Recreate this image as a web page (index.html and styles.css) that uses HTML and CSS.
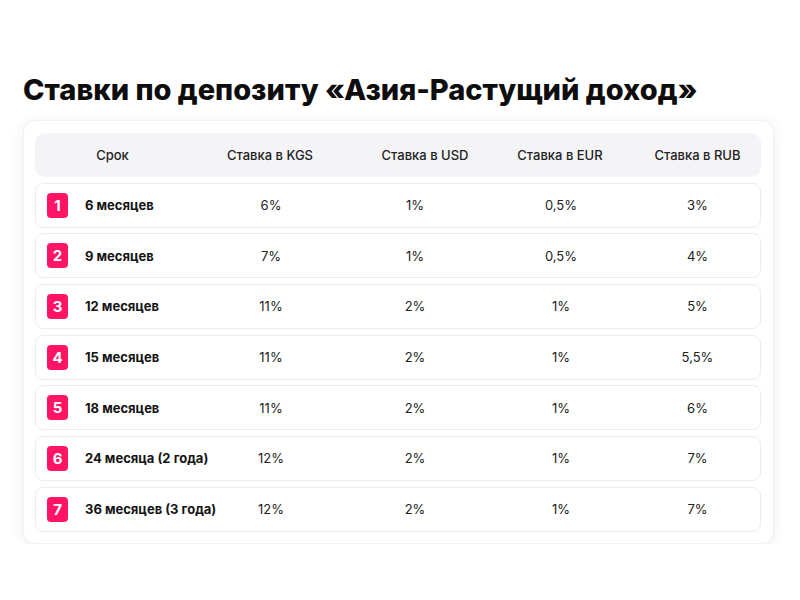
FILE: index.html
```html
<!DOCTYPE html>
<html lang="ru">
<head>
<meta charset="utf-8">
<title>Ставки по депозиту</title>
<link rel="stylesheet" href="styles.css">
</head>
<body>
<main class="page">
  <h1 class="title">Ставки по депозиту «Азия-Растущий доход»</h1>
  <section class="card">
    <div class="grid head">
      <div class="c1">Срок</div>
      <div>Ставка в KGS</div>
      <div>Ставка в USD</div>
      <div>Ставка в EUR</div>
      <div class="c5">Ставка в RUB</div>
    </div>
    <div class="grid row"><div class="term"><span class="badge">1</span>6 месяцев</div><div>6%</div><div class="usd">1%</div><div>0,5%</div><div class="c5">3%</div></div>
    <div class="grid row"><div class="term"><span class="badge">2</span>9 месяцев</div><div>7%</div><div class="usd">1%</div><div>0,5%</div><div class="c5">4%</div></div>
    <div class="grid row"><div class="term"><span class="badge">3</span>12 месяцев</div><div>11%</div><div class="usd">2%</div><div>1%</div><div class="c5">5%</div></div>
    <div class="grid row"><div class="term"><span class="badge">4</span>15 месяцев</div><div>11%</div><div class="usd">2%</div><div>1%</div><div class="c5">5,5%</div></div>
    <div class="grid row"><div class="term"><span class="badge">5</span>18 месяцев</div><div>11%</div><div class="usd">2%</div><div>1%</div><div class="c5">6%</div></div>
    <div class="grid row"><div class="term"><span class="badge">6</span>24 месяца (2 года)</div><div>12%</div><div class="usd">2%</div><div>1%</div><div class="c5">7%</div></div>
    <div class="grid row"><div class="term"><span class="badge">7</span>36 месяцев (3 года)</div><div>12%</div><div class="usd">2%</div><div>1%</div><div class="c5">7%</div></div>
  </section>
</main>
</body>
</html>
```

FILE: styles.css
```css
* { box-sizing: border-box; }
html, body { margin: 0; padding: 0; background: #ffffff; }
body {
  font-family: Inter, "Noto Sans", "DejaVu Sans", sans-serif;
  color: #1a1a1a;
}
.page {
  padding: 72px 26px 0 23px;
}
.title {
  margin: 0 0 12px 0;
  font-size: 29px;
  line-height: 36px;
  font-weight: 800;
  color: #0d0d0d;
}
.card {
  width: 751px;
  background: #fff;
  border-radius: 12px;
  box-shadow: 0 2px 14px rgba(0,0,0,0.08);
  border: 1px solid #f1f1f1;
  padding: 12px 12px 11px 11px;
  display: flex;
  flex-direction: column;
  gap: 5.67px;
}
.grid {
  display: grid;
  grid-template-columns: 155px 160px 150px 120px 1fr;
  align-items: center;
  text-align: center;
  font-size: 13px;
}
.grid .c5 { padding-left: 14px; }
.head {
  height: 44px;
  background: #f4f4f6;
  border-radius: 10px;
  font-weight: 500;
  color: #222;
}
.row {
  height: 45px;
  border: 1px solid #ededed;
  border-radius: 8px;
  color: #222;
}
.row .usd { padding-right: 22px; }
.term {
  display: flex;
  align-items: center;
  text-align: left;
  padding-left: 11px;
  font-weight: 700;
  color: #141414;
  white-space: nowrap;
}
.badge {
  width: 21px;
  height: 25px;
  border-radius: 4px;
  background: #ff1466;
  color: #fff;
  display: inline-flex;
  align-items: center;
  justify-content: center;
  font-weight: 700;
  font-size: 15px;
  margin-right: 17px;
  flex: none;
}
```
